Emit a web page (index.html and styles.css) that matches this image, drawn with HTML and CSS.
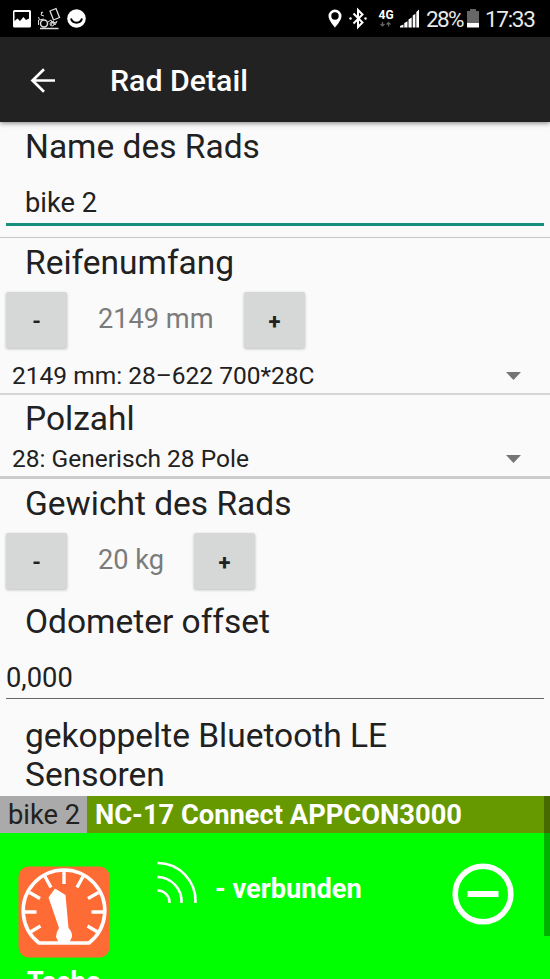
FILE: index.html
```html
<!DOCTYPE html>
<html lang="de">
<head>
<meta charset="utf-8">
<title>Rad Detail</title>
<link rel="stylesheet" href="styles.css">
</head>
<body>
<div class="screen">
  <header class="status">
    <svg class="status-left" width="90" height="37" viewBox="0 0 90 37">
      <path fill="#fff" fill-rule="evenodd" d="M14.5 10h15q1.500 0 1.500 1.500v14.500q0 1.500-1.500 1.500h-15q-1.500 0-1.500-1.500v-14.500q0-1.500 1.500-1.500zM14.500 12v9l3-2.500 2.500 2.500 3.500-4 2.500 3 3-1.500v-6.500z"/>
      <g fill="none" stroke="#ddd" stroke-width="1">
        <path d="M50 11l6-2.500 3.500 9-6 2.500z" stroke-width="1.300"/>
        <path d="M42 12l-1 3 3 1M38.500 17l1 3 4-1M38.500 20v5M48 22l3-2 1 3 5-1M51 25l2-4 2 4 2-4"/>
        <circle cx="44" cy="23.500" r="3.500" stroke-width="1.500"/>
        <circle cx="52" cy="24" r="2"/>
        <circle cx="42" cy="12.500" r=".6"/>
        <path d="M40 28.500h18.500" stroke-width="1.500"/>
      </g>
      <circle cx="76.500" cy="18.500" r="9.300" fill="#fff"/>
      <path d="M71 18.500c1.500 5.500 9.500 5.500 11 0" fill="none" stroke="#000" stroke-width="2"/>
    </svg>
    <div class="status-right">
      <svg width="97" height="37" viewBox="0 0 97 37">
        <path fill="#fff" fill-rule="evenodd" d="M7 9.500a6.500 6.500 0 0 1 6.500 6.500c0 4.500-6.500 11.500-6.500 11.500s-6.500-7-6.500-11.500a6.500 6.500 0 0 1 6.500-6.500zM7 12.300a3.700 3.700 0 1 0 0 7.400 3.700 3.700 0 0 0 0-7.400z"/>
        <path d="M25.500 13.500l9 9-4.500 4.500v-17l4.500 4.500-9 9" fill="none" stroke="#fff" stroke-width="2"/>
        <circle cx="22.500" cy="18.500" r="1.200" fill="#fff"/><circle cx="37.500" cy="18.500" r="1.200" fill="#fff"/>
        <text class="net" x="50.500" y="18.700">4G</text>
        <path d="M54.500 22v4m-2-2l2 2 2-2M60.500 26.500v-4m-2 2l2-2 2 2" fill="none" stroke="#666" stroke-width="1.200"/>
        <path fill="#fff" d="M72 27.500v-1.500l3.500-1.500v3zM76.300 27.500v-4.500l3.200-1.800v6.300zM80.500 27.500v-8l3.200-2v10zM84.700 27.500v-12l2.700-1.800v13.800zM88.300 27.500v-15.500l2.700-2.500v18z"/>
      </svg>
      <span class="percent">28%</span>
      <svg class="battery" width="12" height="19" viewBox="0 0 12 19"><path fill="#666" d="M0 2h3v-2h6v2h3v12h-12z"/><path fill="#fff" d="M0 14h12v4.500h-12z"/></svg>
      <span class="clock">17:33</span>
    </div>
  </header>
  <header class="appbar">
    <svg width="26" height="26" viewBox="0 0 26 26"><path d="M25 12.500H3M14 1.300L2.500 12.500 14 23.700" fill="none" stroke="#fff" stroke-width="2.700"/></svg>
    <h1>Rad Detail</h1>
  </header>
  <main>
    <section class="name">
      <h2>Name des Rads</h2>
      <div class="field active">bike 2</div>
    </section>
    <section class="tyre">
      <h2>Reifenumfang</h2>
      <div class="stepper"><button>-</button><span class="value wide">2149 mm</span><button>+</button></div>
      <div class="spinner"><span>2149 mm: 28–622 700*28C</span><i class="caret"></i></div>
    </section>
    <section class="poles">
      <h2>Polzahl</h2>
      <div class="spinner"><span>28: Generisch 28 Pole</span><i class="caret"></i></div>
    </section>
    <section class="weight">
      <h2>Gewicht des Rads</h2>
      <div class="stepper"><button>-</button><span class="value">20 kg</span><button>+</button></div>
      <h2 class="odo">Odometer offset</h2>
      <div class="field plain">0,000</div>
      <h2 class="sensors">gekoppelte Bluetooth LE<br>Sensoren</h2>
    </section>
    <section class="devices">
      <div class="device-head"><span class="bike">bike 2</span><b>NC-17 Connect APPCON3000</b></div>
      <div class="device">
        <div class="tacho">
          <svg width="92" height="92" viewBox="0 0 92 92">
            <rect x=".5" y=".5" width="91" height="91" rx="10" fill="#ff6b35"/>
            <g fill="none" stroke="#fff">
              <path d="M21 77A40.800 40.800 0 1 1 71 77z" stroke-width="3.600"/>
              <path stroke-width="3.400" d="M46 5v13M27 10.500l6 11M65 10.500l-6 11M11.500 26.500l10.500 6M80.500 26.500l-10.500 6M6 46h12.500M86 46h-12.500M11.500 66.500l11-6.500M80.500 66.500l-11-6.500"/>
            </g>
            <path d="M30.500 31.500L37 22.500l10.500 6.500 3 33q4 4 3.500 9l-3 6h-10l-3-6q0-5 3-9z" fill="#fff"/>
          </svg>
          <b>Tacho</b>
        </div>
        <svg class="waves" width="42" height="44" viewBox="0 0 42 44" fill="none" stroke="#fff" stroke-width="2.600"><path d="M1.500 2a38 38 0 0 1 38 40M1.500 16a24.500 24.500 0 0 1 24 26M1.500 29.500a12 12 0 0 1 12 12.500"/></svg>
        <b class="state">- verbunden</b>
        <svg class="remove" width="62" height="62" viewBox="0 0 62 62" fill="none" stroke="#fff"><circle cx="31" cy="31" r="27.800" stroke-width="5.600"/><path d="M15.500 31h31" stroke-width="6"/></svg>
      </div>
      <div class="scrollbar"></div>
    </section>
  </main>
</div>
</body>
</html>
```
FILE: styles.css
```css
* { box-sizing: border-box; }
body { margin: 0; background: #fafafa; color: #212121; font-family: Roboto, sans-serif; }
.screen { width: 550px; height: 979px; overflow: hidden; display: flex; flex-direction: column; }
.status { height: 37px; flex: none; background: #000; color: #e8e8e8; display: flex; justify-content: space-between; }
.status svg { display: block; flex: none; }
.status-right { display: flex; align-items: center; width: 222px; font-size: 22.5px; line-height: 37px; padding-top: 2px; }
.status-right svg { margin-top: -2px; }
.net { font-size: 12px; font-weight: 700; fill: #fff; }
.percent { margin-left: 1px; width: 37px; letter-spacing: -1.7px; }
.status .battery { margin: -2px 6px 0 4px; }
.clock { letter-spacing: -1.3px; }
.appbar { height: 85px; flex: none; background: #222; color: #fff; display: flex; align-items: center; padding-left: 30px; gap: 54px; box-shadow: 0 1px 5px rgba(0,0,0,.5); z-index: 1; padding-top: 2px; }
h1 { margin: 0; font-size: 30.3px; font-weight: 500; line-height: 40px; padding-top: 1px; white-space: nowrap; }
h2 { margin: 0; padding-left: 25px; font-size: 33.5px; font-weight: 400; line-height: 39px; white-space: nowrap; }
main { flex: none; }
section { display: flex; flex-direction: column; }
.name { height: 116px; padding-top: 5px; border-bottom: 1px solid #c8c8c8; }
.field { margin: 0 6px; font-size: 27.3px; line-height: 36px; }
.active { height: 60px; padding: 19px 0 0 19px; border-bottom: 3px solid #16907c; }
.tyre { height: 157px; padding-top: 5px; border-bottom: 2px solid #d5d5d5; }
.stepper { display: flex; align-items: flex-start; margin: 10px 0 0 6px; height: 57px; }
button { width: 61px; height: 56px; border: 0; border-radius: 2px; padding: 2px 0 0; background: #d6d8d7; box-shadow: 0 1px 3px rgba(0,0,0,.25); color: #212121; font: 700 22px Roboto, sans-serif; }
.value { width: 127px; padding-left: 31px; font-size: 27.2px; line-height: 54px; color: #7b7b7b; white-space: nowrap; }
.wide { width: 177px; }
.spinner { display: flex; align-items: center; justify-content: space-between; font-size: 24.5px; line-height: 30px; padding: 0 29px 0 12px; margin-top: 12px; }
.caret { width: 15px; height: 8px; background: #757575; clip-path: polygon(0 0, 100% 0, 50% 100%); }
.poles { height: 84px; padding-top: 4px; border-bottom: 3px solid #ccc; }
.poles .spinner { margin-top: 6px; }
.weight { height: 317px; padding-top: 5px; }
.odo { margin-top: 12px; }
.plain { height: 58px; padding-top: 19px; border-bottom: 1px solid #666; }
.sensors { margin-top: 17px; }
.devices { position: relative; height: 183px; background: #0f0; color: #fff; }
.device-head { display: flex; height: 37px; background: #690; font-size: 27.3px; line-height: 39px; white-space: nowrap; }
.bike { width: 87px; padding-left: 8px; background: #aaa; color: #212121; }
.device-head b { padding-left: 8px; }
.device { display: flex; align-items: flex-start; height: 146px; overflow: hidden; }
.tacho { width: 92px; margin: 33px 0 0 18px; font-size: 27.3px; line-height: 32px; text-align: center; }
.tacho svg { display: block; }
.tacho b { display: block; padding-top: 8px; }
.waves { margin: 28px 0 0 46px; }
.state { margin: 40px 0 0 17px; font-size: 27.2px; line-height: 32px; white-space: nowrap; }
.remove { margin: 30px 36px 0 auto; }
.scrollbar { position: absolute; top: 0; right: 0; width: 6px; height: 140px; background: rgba(0,0,0,.3); }
```
